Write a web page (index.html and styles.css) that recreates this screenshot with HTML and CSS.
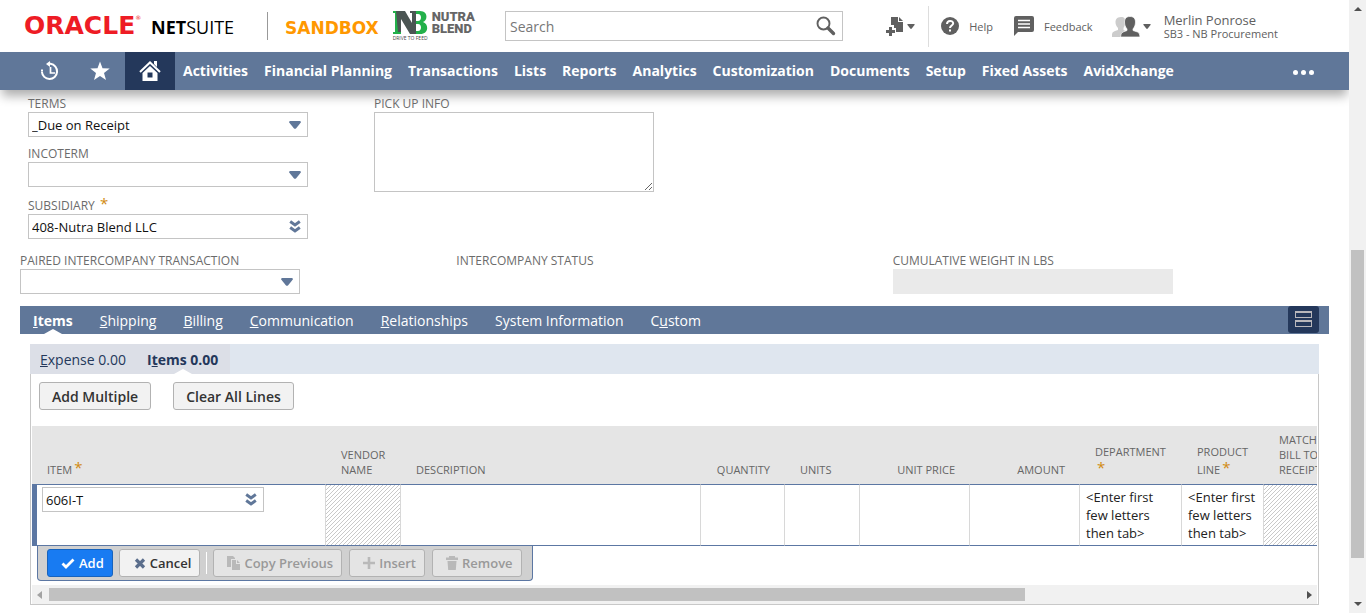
FILE: index.html
```html
<!DOCTYPE html>
<html lang="en">
<head>
<meta charset="utf-8">
<title>Purchase Order - NetSuite</title>
<link rel="stylesheet" href="styles.css">
</head>
<body>
<svg class="sprite" aria-hidden="true">
  <symbol id="caret" viewBox="0 0 12 8"><path d="M1 0h10q1.500 .5 .6 1.700L7.200 7.200q-1.200 1.200-2.400 0L.4 1.700Q-.5.5 1 0z"/></symbol>
  <symbol id="chevrons" viewBox="0 0 12 13"><path d="M1.200 1.500 6 5l4.800-3.500M1.200 7.500 6 11l4.800-3.500" fill="none" stroke="currentColor" stroke-width="2.900"/></symbol>
</svg>
<div class="page">
  <header class="top">
    <div class="brand">
      <div class="oracle">ORACLE<sup>®</sup></div>
      <div class="netsuite"><b>NET</b>SUITE</div>
    </div>
    <div class="env">
      <span class="sandbox">SANDBOX</span>
      <div class="nutra">
        <div class="nb">
          <svg width="35" height="23" viewBox="0 0 35 23" aria-hidden="true">
            <path fill="#23b04a" d="M0 0h6v2H5v19h3v2H0v-2h2V2H0zM20 0h7c8 0 8 9 3 11 6 2 6 12-3 12h-9v-3h7c4 0 4-7 0-7h-2v-3h2c4 0 4-7 0-7h-5z"/>
            <path fill="#4b5553" d="M3 0h9l7 12V2h-2V0h6v23h-6L8 8v13H5z"/>
          </svg>
          <span class="tagline">DRIVE TO FEED</span>
        </div>
        <div class="nutra-name">NUTRA<br>BLEND</div>
      </div>
    </div>
    <form class="search">
      <input type="text" placeholder="Search" aria-label="Search">
      <button type="button" aria-label="Search"><svg width="20" height="20" viewBox="0 0 20 20"><circle cx="7.500" cy="7.500" r="6" fill="none" stroke="#606060" stroke-width="1.900"/><path d="m12 12 5.500 5.500" stroke="#606060" stroke-width="3.400" stroke-linecap="round"/></svg></button>
    </form>
    <div class="tools">
      <button class="tool create" type="button" aria-label="Create new">
        <svg width="19" height="20" viewBox="0 0 19 20"><path fill="#606060" d="M5 1h7v5h5v10h-7v-4H8V9H5zM13 1l4 4h-4zM3 11h3v3h3v3H6v3H3v-3H0v-3h3z"/></svg>
        <svg class="mini" width="8" height="5"><use href="#caret"/></svg>
      </button>
      <a class="tool" href="#help"><svg width="18" height="18" viewBox="0 0 18 18"><circle cx="9" cy="9" r="9" fill="#606060"/><path d="M6 7c0-4 6.200-4 6.200-.7C12.200 8.500 9 8.600 9 11" fill="none" stroke="#fff" stroke-width="2"/><path fill="#fff" d="M8 12.500h2v2H8z"/></svg><span>Help</span></a>
      <a class="tool" href="#feedback"><svg width="20" height="20" viewBox="0 0 20 20"><path fill="#606060" d="M2 0h16q2 0 2 2v12q0 2-2 2H4l-4 4V2q0-2 2-2z"/><path d="M4 4.500h12M4 8h12M4 11.500h12" stroke="#fff" stroke-width="1.500"/></svg><span>Feedback</span></a>
      <button class="tool user" type="button">
        <svg width="28" height="21" viewBox="0 0 28 21"><path fill="#ccc" d="M9 1c3.500 0 4.500 2 4.500 5S12 11 11.500 12v2l2 1v6H0v-3q0-2 3-3l3-1v-2C4 10 3.500 8 3.500 6S4.500 1 9 1z"/><path fill="#606060" stroke="#fff" stroke-width=".7" d="M18 .5c4 0 5.500 2.500 5.500 5.500s-1 5-2.500 7v1.500l4.500 1.500q2.500 1 2.500 5H8.500q0-4 2.500-5l4-1.500V13c-1.500-2-2.500-4-2.500-7S14 .5 18 .5z"/></svg>
        <svg class="mini" width="8" height="5"><use href="#caret"/></svg>
        <span class="who"><span class="who-name">Merlin Ponrose</span><span>SB3 - NB Procurement</span></span>
      </button>
    </div>
  </header>

  <nav class="nav">
    <a class="nav-icon" href="#recent" aria-label="Recent records"><svg width="20" height="20" viewBox="0 0 20 20" fill="none" stroke="#fff"><path d="M8 2.800h2.500a7.600 7.600 0 1 1-8.600 8" stroke-width="2"/><path d="M10.500 6v6h4.500" stroke-width="1.700"/><path d="M10 0v6L6 3z" fill="#fff" stroke="none"/><path d="M1 9.500h2" stroke-width="2"/></svg></a>
    <a class="nav-icon" href="#shortcuts" aria-label="Shortcuts"><svg width="20" height="20" viewBox="0 0 20 20"><path fill="#fff" d="m10 .5 2.500 6.700 7.200.3-5.700 4.400 2 7.100-6-4.100L4 19l2-7.100L.3 7.500l7.200-.3z"/></svg></a>
    <a class="nav-icon home" href="#home" aria-label="Home"><svg width="22" height="20" viewBox="0 0 22 20"><path d="m1 11 10-9.500L21 11" fill="none" stroke="#fff" stroke-width="2"/><path fill="#fff" d="M15 0h3v6l-3-3zM11 5l7.500 7v8h-15v-8zM8.500 11.500v5h5v-5z" fill-rule="evenodd"/></svg></a>
    <div class="menu">
      <a href="#activities">Activities</a><a href="#fp">Financial Planning</a><a href="#tr">Transactions</a><a href="#li">Lists</a><a href="#re">Reports</a><a href="#an">Analytics</a><a href="#cu">Customization</a><a href="#do">Documents</a><a href="#se">Setup</a><a href="#fa">Fixed Assets</a><a href="#av">AvidXchange</a>
    </div>
    <button class="more" type="button" aria-label="More"><i></i><i></i><i></i></button>
  </nav>

  <main class="content">
    <div class="fields">
      <div class="column">
        <div class="field"><label for="terms">TERMS</label><div class="pick"><select id="terms"><option>_Due on Receipt</option></select><svg width="12" height="8"><use href="#caret"/></svg></div></div>
        <div class="field"><label for="inco">INCOTERM</label><div class="pick"><select id="inco"><option></option></select><svg width="12" height="8"><use href="#caret"/></svg></div></div>
        <div class="field spaced"><label for="sub">SUBSIDIARY <span class="req">*</span></label><div class="pick"><select id="sub"><option>408-Nutra Blend LLC</option></select><svg width="12" height="13"><use href="#chevrons"/></svg></div></div>
      </div>
      <div class="field"><label for="pickup">PICK UP INFO</label><textarea id="pickup"></textarea></div>
    </div>

    <div class="thirds">
      <div class="field"><label for="paired">PAIRED INTERCOMPANY TRANSACTION</label><div class="pick"><select id="paired"><option></option></select><svg width="12" height="8"><use href="#caret"/></svg></div></div>
      <div class="field"><span class="label">INTERCOMPANY STATUS</span></div>
      <div class="field"><label for="weight">CUMULATIVE WEIGHT IN LBS</label><input class="readonly" id="weight" type="text" readonly></div>
    </div>

    <div class="tabs">
      <a class="active" href="#items"><u>I</u>tems</a><a href="#shipping"><u>S</u>hipping</a><a href="#billing"><u>B</u>illing</a><a href="#comm"><u>C</u>ommunication</a><a href="#rel"><u>R</u>elationships</a><a href="#sys">System Information</a><a href="#custom">C<u>u</u>stom</a>
      <button class="layout" type="button" aria-label="Toggle layout"><svg width="17" height="17" viewBox="0 0 17 17"><path fill="#b9b7bb" fill-rule="evenodd" d="M0 0h17v7H0zm1 2v4h15V2zM0 9h17v7H0zm1 2v4h15v-4z"/></svg></button>
    </div>

    <section class="panel">
      <div class="subtabs">
        <div class="subtab-group"><a href="#expense"><u>E</u>xpense 0.00</a><a class="active" href="#item-lines">I<u>t</u>ems 0.00</a></div>
      </div>
      <div class="frame">
        <div class="bar"><button class="btn" type="button">Add Multiple</button><button class="btn" type="button">Clear All Lines</button></div>
        <div class="scroller">
          <table class="lines">
            <colgroup><col class="c-item"><col class="c-sm"><col class="c-desc"><col class="c-qty"><col class="c-sm"><col class="c-num"><col class="c-num"><col class="c-dept"><col class="c-prod"><col class="c-match"></colgroup>
            <thead><tr>
              <th class="first">ITEM<span class="req">*</span></th><th>VENDOR NAME</th><th>DESCRIPTION</th><th class="num">QUANTITY</th><th>UNITS</th><th class="num">UNIT PRICE</th><th class="num">AMOUNT</th><th>DEPARTMENT <span class="req">*</span></th><th>PRODUCT LINE<span class="req">*</span></th><th>MATCH<br>BILL TO<br>RECEIPT</th>
            </tr></thead>
            <tbody><tr>
              <td class="first"><div class="pick item"><select aria-label="Item"><option>606I-T</option></select><svg width="12" height="13"><use href="#chevrons"/></svg></div></td><td class="hatch"></td><td></td><td></td><td></td><td></td><td></td><td>&lt;Enter first few letters then tab&gt;</td><td>&lt;Enter first few letters then tab&gt;</td><td class="hatch"></td>
            </tr></tbody>
          </table>
          <div class="actions">
            <button class="btn primary" type="button"><svg width="14" height="11" viewBox="0 0 14 11"><path d="m1.500 5.500 3.500 3.500 7.500-7.500" fill="none" stroke="#fff" stroke-width="2.800"/></svg>Add</button>
            <button class="btn cancel" type="button"><svg width="12" height="11" viewBox="0 0 12 11"><path d="m2 1.500 8 8m0-8-8 8" stroke="#5b6e8c" stroke-width="3.200"/></svg>Cancel</button>
            <span class="rule"></span>
            <button class="btn" type="button" disabled><svg width="13" height="14" viewBox="0 0 13 14"><path fill="#b9b9b9" d="M0 0h6l2 2v1H4v8H0zM5 4h4v4h4v6H5zM10 4l3 3h-3z"/></svg>Copy Previous</button>
            <button class="btn" type="button" disabled><svg width="12" height="12" viewBox="0 0 12 12"><path fill="#b9b9b9" d="M4.700 0h2.600v4.700H12v2.600H7.300V12H4.700V7.300H0V4.700h4.700z"/></svg>Insert</button>
            <button class="btn" type="button" disabled><svg width="12" height="14" viewBox="0 0 12 14"><path fill="#b9b9b9" d="M3 0h6v1.500h3V4H0V1.500h3zM1.500 5h9l-.7 9H2.200z"/></svg>Remove</button>
          </div>
        </div>
        <div class="hscroll" aria-hidden="true"><i class="arrow left"></i><div class="htrack"><div class="hthumb"></div></div><i class="arrow right"></i></div>
      </div>
    </section>
  </main>
</div>
<div class="vscroll" aria-hidden="true"><i class="arrow up"></i><div class="vthumb"></div><i class="arrow down"></i></div>
</body>
</html>
```
FILE: styles.css
```css
* { box-sizing: border-box; }
body { margin: 0; height: 100vh; display: flex; overflow: hidden; background: #fff; color: #222; font: 13px "Open Sans", sans-serif; }
button, input, select, textarea { font: inherit; color: inherit; margin: 0; border-radius: 0; }
a { color: inherit; text-decoration: none; }
svg { display: block; flex: none; }
.sprite { display: none; }
.page { flex: 1; min-width: 0; overflow: hidden; }

/* Header */
.top { height: 52px; display: flex; align-items: center; }
.brand { flex: none; display: flex; align-items: center; gap: 4px; width: 268px; height: 28px; padding-left: 24px; margin-right: 17px; border-right: 1px solid #999; }
.oracle { display: flex; align-items: center; width: 123px; color: #ee1c25; font: bold 25px/24px "DejaVu Sans", sans-serif; }
.oracle sup { align-self: flex-start; font-size: 6px; line-height: 8px; font-weight: normal; }
.netsuite { color: #000; font-size: 18px; line-height: 24px; padding-top: 2px; }
.env { flex: none; display: flex; align-items: center; gap: 14px; width: 220px; }
.sandbox { color: #ff9800; font: bold 17px/20px "DejaVu Sans", sans-serif; padding-top: 4px; }
.nutra { display: flex; gap: 4px; }
.nb { display: flex; flex-direction: column; gap: 1px; width: 35px; }
.tagline { font-size: 5px; line-height: 6px; color: #444; white-space: nowrap; }
.nutra-name { color: #666; font: 900 13px/12px Roboto, sans-serif; }
.search { flex: 1; display: flex; align-items: center; height: 30px; border: 1px solid #c4c4c4; }
.search input { flex: 1; min-width: 0; height: 28px; border: 0; padding: 0 4px; font-size: 14px; outline: 0; }
.search input::placeholder { color: #777; opacity: 1; }
.search button { border: 0; background: none; padding: 0 6px; }
.tools { flex: none; display: flex; align-items: center; padding-right: 71px; margin-left: 43px; color: #606060; font-size: 11px; }
.tool { display: flex; align-items: center; gap: 10px; margin-right: 21px; }
button.tool { border: 0; background: none; padding: 0; text-align: left; }
button.create { gap: 2px; height: 41px; padding-right: 13px; margin-right: 12px; border-right: 1px solid #ddd; }
button.user { gap: 3px; margin: 0 0 0 -2px; }
.mini { fill: #606060; }
.who { display: flex; flex-direction: column; line-height: 13px; margin-left: 10px; padding-top: 2px; }
.who-name { font-size: 13px; }

/* Main menu */
.nav { height: 38px; display: flex; align-items: center; padding-left: 25px; background: #607799; color: #fff; box-shadow: 0 8px 10px -2px rgba(0, 0, 0, .32); }
.nav-icon { width: 50px; height: 38px; display: flex; align-items: center; justify-content: center; }
.nav-icon.home { background: #24385b; }
.menu { display: flex; gap: 16px; padding: 0 0 2px 8px; font-size: 14px; font-weight: 700; white-space: nowrap; }
.more { display: flex; gap: 3px; margin-left: auto; margin-right: 35px; border: 0; background: none; padding: 3px 0 0; }
.more i { width: 5px; height: 5px; border-radius: 50%; background: #fff; }

/* Form fields */
.content { position: relative; padding: 5px 20px 0; }
.fields { display: flex; gap: 66px; padding-left: 8px; }
.column { display: flex; flex-direction: column; gap: 8px; }
.field { width: 280px; }
.field.spaced { padding-top: 2px; }
label, .label { display: block; font-size: 12px; line-height: 17px; color: #6b6b6b; white-space: nowrap; }
.req { color: #d18a0f; font-size: 15px; line-height: 12px; vertical-align: 1px; margin-left: 2px; }
.pick { display: grid; align-items: center; height: 25px; color: #607799; fill: #607799; }
.pick select, .pick svg { grid-area: 1 / 1; }
.pick select { appearance: none; width: 100%; height: 25px; padding: 0 3px; border: 1px solid #c4c4c4; background: #fff; color: #111; outline: 0; }
.pick svg { justify-self: end; margin-right: 7px; pointer-events: none; }
textarea { display: block; width: 280px; height: 80px; border: 1px solid #c4c4c4; outline: 0; }
.thirds { display: grid; grid-template-columns: repeat(3, 1fr); padding-top: 13px; }
.readonly { display: block; width: 280px; height: 25px; border: 0; background: #eaeaea; }

/* Tabs */
.tabs { display: flex; align-items: stretch; height: 28px; margin-top: 12px; padding: 0 10px 0 13px; background: #607799; color: #fff; font-size: 14px; line-height: 29px; gap: 27px; }
.active { font-weight: 700; position: relative; }
.active::after { content: ""; position: absolute; left: 50%; bottom: 0; margin-left: -9px; border: solid transparent; border-width: 0 9px 5px; border-bottom-color: #fff; }
.layout { margin-left: auto; width: 31px; height: 27px; padding: 0 7px; border: 0; border-radius: 3px; background: #24385b; }
.panel { margin: 10px 10px 0; }
.subtabs { height: 30px; background: #dfe6ef; color: #24385b; }
.subtab-group { display: inline-flex; gap: 21px; height: 30px; padding: 0 12px 0 10px; background: #dcdfe7; font-size: 14px; line-height: 31px; }
.frame { border: 1px solid #c8c8c8; border-top: 0; padding: 0 1px; }
.bar { display: flex; gap: 22px; padding: 8px 7px 16px; }
.btn { display: flex; align-items: center; gap: 6px; height: 28px; padding: 0 12px; border: 1px solid #b2b2b2; border-radius: 3px; background: #f2f2f2; color: #333; font-size: 14px; font-weight: 600; white-space: nowrap; }

/* Line items */
.scroller { overflow: hidden; height: 159px; }
.lines { width: 1331px; table-layout: fixed; border-collapse: separate; border-spacing: 0; }
.c-item { width: 293px; } .c-sm { width: 75px; } .c-desc { width: 300px; } .c-qty { width: 84px; }
.c-num { width: 110px; } .c-dept { width: 102px; } .c-prod { width: 82px; } .c-match { width: 100px; }
th { height: 58px; padding: 0 14px 7px 16px; background: #e5e5e5; vertical-align: bottom; text-align: left; font-size: 11px; font-weight: 400; line-height: 15px; color: #666; }
th.first { padding-left: 15px; }
th.num { text-align: right; }
th .req { display: inline-block; padding-top: 2px; }
td { height: 62px; padding: 3px 6px 0; border: solid #5c77a3; border-width: 1px 0; border-left: 1px solid #d8d8d8; vertical-align: top; font-size: 13px; line-height: 18px; }
td.first { border-left: 5px solid #5c77a3; padding: 2px 5px; }
.item { width: 222px; }
.hatch { background: linear-gradient(135deg, #c9c9c9 12.5%, #fff 12.5% 50%, #c9c9c9 50% 62.5%, #fff 62.5%) 0 0 / 4px 4px; }
.actions { display: inline-flex; align-items: center; gap: 6px; height: 35px; margin-left: 5px; padding: 0 10px 0 9px; border: 1px solid #5c77a3; border-top: 0; border-radius: 0 0 4px 4px; background: #d0d0d0; }
.actions .btn { font-size: 13px; gap: 4px; padding: 0 8px 0 13px; }
.actions .cancel { padding-left: 14px; }
.actions .primary { background: #187bf2; border-color: #1763bd; color: #fff; }
.actions .btn:disabled { background: #e4e4e4; color: #999; }
.actions .btn:disabled + .btn { margin-left: 1px; }
.rule { width: 1px; height: 22px; background: #fff; }

/* Scroll bars */
.hscroll { display: flex; align-items: center; height: 19px; padding: 0 5px; background: #f1f1f1; }
.htrack { flex: 1; margin: 0 7px; }
.hthumb { width: 78%; height: 13px; background: #c1c1c1; }
.vscroll { flex: none; width: 17px; display: flex; flex-direction: column; align-items: center; padding: 7px 0; background: #f1f1f1; }
.vthumb { width: 13px; height: 308px; margin: auto 0 44px; background: #c1c1c1; }
.arrow { border: 4px solid transparent; }
.arrow.left { border-width: 4px 5px 4px 0; border-right-color: #a3a3a3; }
.arrow.right { border-width: 4px 0 4px 5px; border-left-color: #505050; }
.arrow.up { border-width: 0 4px 4px; border-bottom-color: #505050; }
.arrow.down { border-width: 4px 4px 0; border-top-color: #505050; }
```
